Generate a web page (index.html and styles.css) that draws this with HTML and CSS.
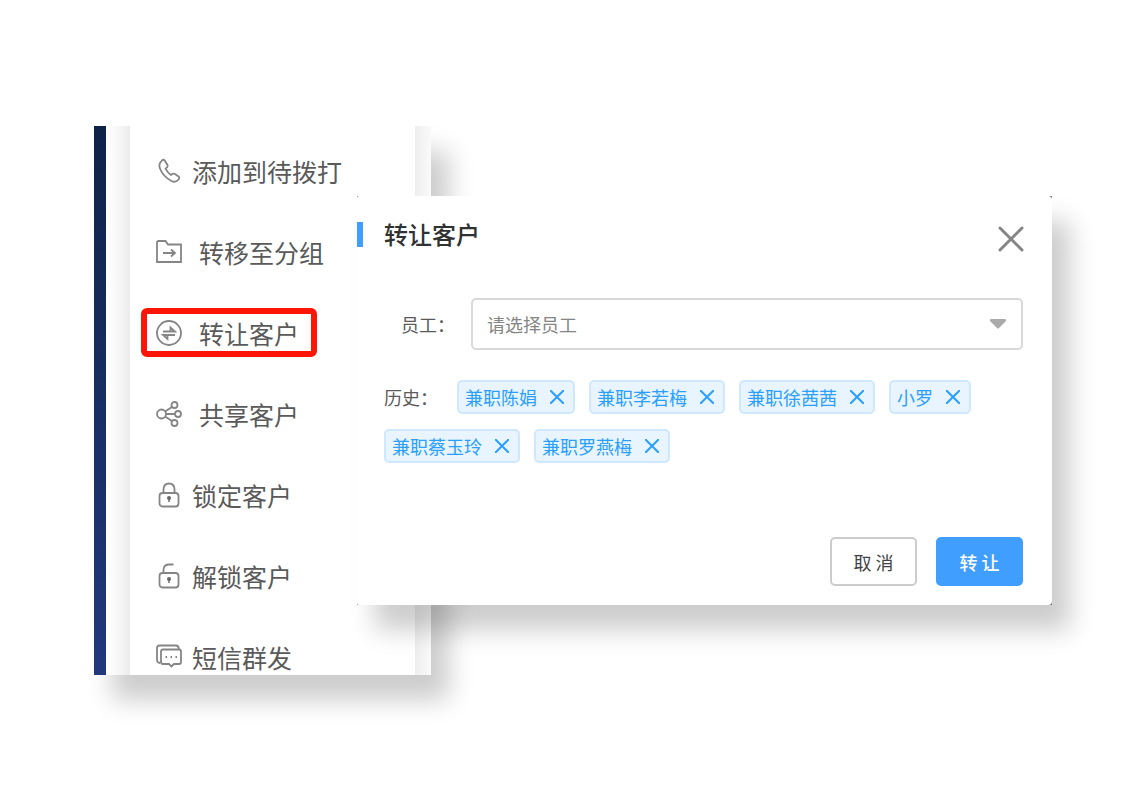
FILE: index.html
```html
<!DOCTYPE html>
<html lang="zh-CN">
<head>
  <meta charset="UTF-8">
  <meta name="viewport" content="width=device-width, initial-scale=1.0">
  <title>转让客户</title>
  <link rel="stylesheet" href="styles.css">
</head>
<body>
<main class="stage">

  <!-- Customer action menu -->
  <nav class="panel">
    <div class="panel-edge"></div>
    <div class="panel-gutter"></div>
    <ul class="menu">
      <li>
        <a class="menu-link" href="#">
          <svg class="icon" viewBox="0 0 26 26"><path d="M4 5 L6 2.5 Q7.500 1 8.700 2.500 L11.500 7 Q12 8.300 11 9.300 L9.500 10.700 Q11.500 14.500 15 17 L16.700 15.800 Q17.800 15.200 19 16 L22.500 18.500 Q24 19.700 22.500 21.500 Q19.500 25 15.500 23 Q7 18.500 4 10.500 Q2.800 7.500 4 5 Z"/></svg>
          添加到待拨打
        </a>
      </li>
      <li>
        <a class="menu-link spaced" href="#">
          <svg class="icon" viewBox="0 0 26 26"><path d="M1 23 V3.500 Q1 2 2.500 2 H9.500 L12 5.500 H25 V23 Z M7 14 H19 M15 10.500 L19 14 L15 17.500"/></svg>
          转移至分组
        </a>
      </li>
      <li>
        <a class="menu-link spaced marked" href="#">
          <svg class="icon" viewBox="0 0 26 26"><circle cx="13" cy="13" r="12"/><path d="M7 11.500 H19 L14.500 7.500 V11.500 M19 15 H7 L11.500 19 V15"/></svg>
          转让客户
        </a>
      </li>
      <li>
        <a class="menu-link spaced" href="#">
          <svg class="icon" viewBox="0 0 26 26"><circle cx="5.500" cy="13" r="4.500"/><circle cx="18.500" cy="4" r="3"/><circle cx="22" cy="13" r="3"/><circle cx="18.500" cy="22" r="3"/><path d="M9 10.500 L16 6 M10 13 H19 M9 15.500 L16 20"/></svg>
          共享客户
        </a>
      </li>
      <li>
        <a class="menu-link" href="#">
          <svg class="icon" viewBox="0 0 26 26"><rect x="3.500" y="11" width="19" height="13.500" rx="3"/><path d="M7.500 11 V7 Q8 1.500 13 1.500 Q18 1.500 18.500 7 V11 M13 16.500 V20"/><circle class="dot" cx="13" cy="16" r="2"/></svg>
          锁定客户
        </a>
      </li>
      <li>
        <a class="menu-link" href="#">
          <svg class="icon" viewBox="0 0 26 26"><rect x="3.500" y="10" width="19" height="14.500" rx="3"/><path d="M7.500 10 V6.500 Q8 1.500 13 1.500 H17.500 M13 16.500 V20"/><circle class="dot" cx="13" cy="16" r="2"/></svg>
          解锁客户
        </a>
      </li>
      <li>
        <a class="menu-link" href="#">
          <svg class="icon" viewBox="0 0 26 26"><path d="M4 19 Q1 18.500 1 16 V4 Q1 1.500 3.500 1.500 H20 Q22.500 1.500 23 5 M5 7.500 Q5 5.500 7 5.500 H23 Q25 5.500 25 7.500 V18 Q25 20 23 20 H18 L15.500 22.500 L13 20 H7 Q5 20 5 18 Z M9.500 13 H11 M14.500 13 H16 M19.500 13 H21"/></svg>
          短信群发
        </a>
      </li>
    </ul>
    <div class="panel-scroll"></div>
  </nav>

  <!-- Transfer dialog -->
  <section class="dialog" role="dialog" aria-labelledby="dialog-title">
    <form class="dialog-box">
      <header class="dialog-header">
        <h1 class="dialog-title" id="dialog-title">转让客户</h1>
        <button class="close" type="button" aria-label="关闭">
          <svg viewBox="0 0 26 26"><path d="M2 2 L24 24 M24 2 L2 24"/></svg>
        </button>
      </header>

      <div class="field">
        <label class="field-label" for="staff">员工：</label>
        <div class="select-wrap">
          <select class="select" id="staff">
            <option>请选择员工</option>
          </select>
          <svg class="arrow" viewBox="0 0 18 10"><path d="M2 0 H16 Q18 0.500 17 2 L10 9 Q9 10 8 9 L1 2 Q0 0.500 2 0 Z"/></svg>
        </div>
      </div>

      <div class="history">
        <span class="history-label">历史：</span>
        <span class="tag">兼职陈娟<button class="tag-close" type="button" aria-label="移除"><svg viewBox="0 0 14 14"><path d="M0 0 L14 14 M14 0 L0 14"/></svg></button></span>
        <span class="tag">兼职李若梅<button class="tag-close" type="button" aria-label="移除"><svg viewBox="0 0 14 14"><path d="M0 0 L14 14 M14 0 L0 14"/></svg></button></span>
        <span class="tag">兼职徐茜茜<button class="tag-close" type="button" aria-label="移除"><svg viewBox="0 0 14 14"><path d="M0 0 L14 14 M14 0 L0 14"/></svg></button></span>
        <span class="tag">小罗<button class="tag-close" type="button" aria-label="移除"><svg viewBox="0 0 14 14"><path d="M0 0 L14 14 M14 0 L0 14"/></svg></button></span>
        <span class="tag">兼职蔡玉玲<button class="tag-close" type="button" aria-label="移除"><svg viewBox="0 0 14 14"><path d="M0 0 L14 14 M14 0 L0 14"/></svg></button></span>
        <span class="tag">兼职罗燕梅<button class="tag-close" type="button" aria-label="移除"><svg viewBox="0 0 14 14"><path d="M0 0 L14 14 M14 0 L0 14"/></svg></button></span>
      </div>

      <footer class="dialog-footer">
        <button class="btn" type="button">取 消</button>
        <button class="btn btn-primary" type="button">转 让</button>
      </footer>
    </form>
  </section>

</main>
</body>
</html>
```
FILE: styles.css
```css
* {
  margin: 0;
  padding: 0;
  box-sizing: border-box;
}

body {
  font-family: "Noto Sans CJK SC", sans-serif;
  background: #fff;
  color: #5a5a5a;
}

button,
select {
  font-family: inherit;
  cursor: pointer;
}

svg {
  display: block;
  fill: none;
}

.stage {
  display: flex;
  align-items: flex-start;
  padding: 126px 84px 80px 94px;
}

/* Menu panel */
.panel {
  display: flex;
  flex: none;
  background: #fff;
  box-shadow: 18px 25px 24px rgba(0, 0, 0, 0.2);
  overflow: hidden;
}

.panel-edge {
  width: 12px;
  background: linear-gradient(#0f2347, #22387c);
}

.panel-gutter {
  width: 24px;
  background: linear-gradient(to right, #fff, #f8f8f8 50%, #ebebeb);
}

.panel-scroll {
  width: 16px;
  background: linear-gradient(to right, #eee, #fafafa);
}

.menu {
  width: 285px;
  padding: 20px 0 0 11px;
  margin-bottom: -6px;
  list-style: none;
}

.menu li {
  display: flex;
  margin-bottom: 32px;
}

.menu li:last-child {
  margin-bottom: 0;
}

.menu-link {
  display: flex;
  align-items: center;
  gap: 10px;
  height: 49px;
  padding: 0 12px 0 9px;
  border: 6px solid transparent;
  border-radius: 6px;
  color: #5a5a5a;
  font-size: 25px;
  line-height: 36px;
  text-decoration: none;
  white-space: nowrap;
}

.menu-link.spaced {
  gap: 17px;
}

.menu-link.marked {
  border-color: #fd1508;
}

.icon {
  width: 26px;
  height: 26px;
  stroke: #858585;
  stroke-width: 1.8;
}

.icon .dot {
  fill: #666;
  stroke: none;
}

/* Dialog */
.dialog {
  position: relative;
  flex: 1;
  margin: 70px 0 0 -74px;
  background: #777;
  box-shadow: 18px 25px 24px rgba(0, 0, 0, 0.2);
}

.dialog-box {
  padding: 26px 29px 19px 0;
  background: #fff;
  border-radius: 2px 4px 4px 2px;
}

.dialog-header {
  display: flex;
  justify-content: space-between;
  height: 76px;
}

.dialog-title {
  height: 25px;
  padding-left: 21px;
  border-left: 6px solid #409eff;
  color: #303133;
  font-size: 24px;
  font-weight: 500;
  line-height: 24px;
}

.close {
  width: 26px;
  height: 26px;
  margin: 4px -1px 0 0;
  border: none;
  background: none;
}

.close svg {
  stroke: #858585;
  stroke-width: 3;
  stroke-linecap: round;
}

.field {
  display: flex;
  align-items: center;
  padding-left: 44px;
}

.field-label {
  width: 70px;
  font-size: 18px;
}

.select-wrap {
  position: relative;
  flex: 1;
}

.select {
  display: block;
  width: 100%;
  height: 52px;
  padding: 0 40px 0 14px;
  border: 2px solid #d9d9d9;
  border-radius: 5px;
  background: #fff;
  color: #858585;
  font-size: 18px;
  appearance: none;
}

.arrow {
  position: absolute;
  top: 21px;
  right: 16px;
  width: 18px;
  height: 10px;
  fill: #aaa;
  pointer-events: none;
}

.history {
  display: flex;
  flex-wrap: wrap;
  gap: 15px 14px;
  padding: 30px 0 74px 27px;
  font-size: 18px;
  line-height: 34px;
}

.history-label {
  width: 59px;
}

.tag {
  display: flex;
  align-items: center;
  gap: 13px;
  height: 34px;
  padding: 0 9px 0 6px;
  border: 2px solid #cfe8ff;
  border-radius: 5px;
  background: #e8f4ff;
  color: #2b9fff;
  white-space: nowrap;
}

.tag-close {
  width: 14px;
  height: 14px;
  border: none;
  background: none;
}

.tag-close svg {
  stroke: #2b9fff;
  stroke-width: 2;
}

.dialog-footer {
  display: flex;
  justify-content: flex-end;
  gap: 19px;
}

.btn {
  width: 87px;
  height: 49px;
  border: 2px solid #ccc;
  border-radius: 5px;
  background: #fff;
  color: #444;
  font-size: 18px;
}

.btn-primary {
  border-color: #409eff;
  background: #409eff;
  color: #fff;
  font-weight: 500;
}
```
